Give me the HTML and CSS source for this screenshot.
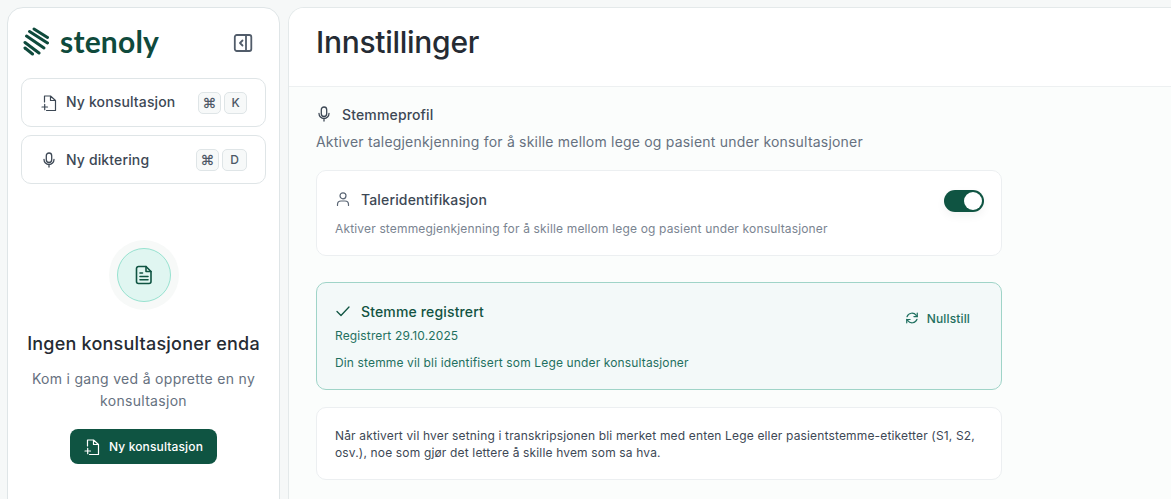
FILE: index.html
```html
<!DOCTYPE html>
<html lang="no">
<head>
<meta charset="utf-8">
<title>Stenoly</title>
<link rel="stylesheet" href="styles.css">
</head>
<body>
<div class="app">
  <aside class="sidebar">
    <div class="brand">
      <div class="logo">
        <svg class="logo-mark" viewBox="0 0 26 29" width="26" height="29"><g stroke="#0f4a3c" stroke-width="3" stroke-linecap="round"><path d="M11 2 L24.500 10.500"/><path d="M6.500 4.500 L24.500 16"/><path d="M3.500 9 L21 21"/><path d="M2 15.500 L16 26"/><path d="M2 21 L9.500 27"/></g></svg>
        <span class="logo-text">stenoly</span>
      </div>
      <svg class="collapse" viewBox="0 0 20 20" width="20" height="20" fill="none" stroke="#515c6a" stroke-width="1.800"><rect x="1.800" y="2" width="16.500" height="16" rx="2"/><path d="M13 2v16M9.500 7.500 7 10l2.500 2.500" stroke-linecap="round" stroke-linejoin="round"/></svg>
    </div>
    <div class="action">
      <svg class="ic" viewBox="0 0 16 16" width="16" height="16" fill="none" stroke="#3d4855" stroke-width="1.200" stroke-linejoin="round" stroke-linecap="round"><path d="M3.500 7V1h6l5 4.500V15.500H5.500M9.500 1v4.500h5M1 12h5.500M3.700 9.300v5.400"/></svg>
      <span class="action-label raised">Ny konsultasjon</span>
      <span class="keys"><kbd class="key cmd">⌘</kbd><kbd class="key">K</kbd></span>
    </div>
    <div class="action">
      <svg class="ic" viewBox="0 0 16 16" width="16" height="16" fill="none" stroke="#3d4855" stroke-width="1.300" stroke-linecap="round"><rect x="5.300" y="1" width="5.400" height="9.500" rx="2.700"/><path d="M3 7.500a5 5 0 0 0 10 0M8 12.500V15"/></svg>
      <span class="action-label">Ny diktering</span>
      <span class="keys"><kbd class="key cmd">⌘</kbd><kbd class="key wide">D</kbd></span>
    </div>
    <div class="empty">
      <div class="halo">
        <div class="circle">
          <svg viewBox="0 0 20 20" width="20" height="20" fill="none" stroke="#0f5442" stroke-width="1.600" stroke-linejoin="round" stroke-linecap="round"><path d="M4.500 1.500h7.500l5 5v10a2 2 0 0 1-2 2H4.500a2 2 0 0 1-2-2v-13a2 2 0 0 1 2-2z"/><path d="M12 1.500v5h5M6 8h2.500M6 11.500h8M6 14.800h8"/></svg>
        </div>
      </div>
      <h2 class="empty-title">Ingen konsultasjoner enda</h2>
      <p class="empty-text">Kom i gang ved å opprette en ny konsultasjon</p>
      <div class="primary">
        <svg viewBox="0 0 16 16" width="16" height="16" fill="none" stroke="#fff" stroke-width="1.200" stroke-linejoin="round" stroke-linecap="round"><path d="M3.500 7V1h6l5 4.500V15.500H5.500M9.500 1v4.500h5M1 12h5.500M3.700 9.300v5.400"/></svg>
        <span>Ny konsultasjon</span>
      </div>
    </div>
  </aside>
  <main class="main">
    <header class="header"><h1 class="title">Innstillinger</h1></header>
    <div class="content">
      <div class="section-head">
        <svg viewBox="0 0 16 16" width="16" height="16" fill="none" stroke="#3d4855" stroke-width="1.300" stroke-linecap="round"><rect x="5.300" y="1" width="5.400" height="9.500" rx="2.700"/><path d="M3 7.500a5 5 0 0 0 10 0M8 12.500V15"/></svg>
        <span>Stemmeprofil</span>
      </div>
      <p class="section-sub">Aktiver talegjenkjenning for å skille mellom lege og pasient under konsultasjoner</p>
      <section class="card speaker">
        <div class="speaker-text">
          <div class="speaker-head">
            <svg viewBox="0 0 16 16" width="16" height="16" fill="none" stroke="#5b6675" stroke-width="1.200" stroke-linecap="round"><circle cx="8" cy="4.800" r="3"/><path d="M2.500 14.500v-1a3.500 3.500 0 0 1 3.500-3.500h4a3.500 3.500 0 0 1 3.500 3.500v1"/></svg>
            <span>Taleridentifikasjon</span>
          </div>
          <p class="speaker-sub">Aktiver stemmegjenkjenning for å skille mellom lege og pasient under konsultasjoner</p>
        </div>
        <div class="toggle"><span class="knob"></span></div>
      </section>
      <section class="registered">
        <div class="reg-main">
          <div class="reg-head">
            <svg viewBox="0 0 16 16" width="16" height="16" fill="none" stroke="#0f5442" stroke-width="1.300" stroke-linecap="round" stroke-linejoin="round"><path d="M2 8.500 6 12.500 14 4"/></svg>
            <span>Stemme registrert</span>
          </div>
          <div class="reg-date">Registrert 29.10.2025</div>
          <div class="reg-note">Din stemme vil bli identifisert som Lege under konsultasjoner</div>
        </div>
        <div class="reset">
          <svg viewBox="0 0 16 16" width="14" height="14" fill="none" stroke="#1f7060" stroke-width="1.400" stroke-linecap="round" stroke-linejoin="round"><path d="M14 2.500v3.800h-3.800M2 13.500V9.700h3.800"/><path d="M2.300 6.500a6 6 0 0 1 10.500-1.500L14 6.300M13.700 9.500a6 6 0 0 1-10.500 1.500L2 9.700"/></svg>
          <span>Nullstill</span>
        </div>
      </section>
      <section class="card info">Når aktivert vil hver setning i transkripsjonen bli merket med enten Lege eller pasientstemme-etiketter (S1, S2, osv.), noe som gjør det lettere å skille hvem som sa hva.</section>
    </div>
  </main>
</div>
</body>
</html>
```
FILE: styles.css
```css
* { box-sizing: border-box; }
html, body { margin: 0; height: 100%; overflow: hidden; }
body { background: #f6f8f8; font-family: "Inter", "Liberation Sans", sans-serif; color: #252b33; }
.app { display: flex; gap: 8px; padding: 7px 0 0 7px; height: 499px; overflow: hidden; }
.sidebar { width: 273px; height: 520px; flex: none; background: #fff; border: 1px solid #dfe5e7; border-radius: 16px; padding: 13px 13px 0; display: flex; flex-direction: column; }
.brand { display: flex; align-items: center; justify-content: space-between; height: 44px; padding: 0 13px 0 2px; margin-bottom: 13px; }
.logo { display: flex; align-items: center; gap: 11px; margin-bottom: 4px; }
.logo-text { font-family: "Lato", sans-serif; font-size: 30px; font-weight: 700; color: #0f4a3c; line-height: 1; letter-spacing: 0.2px; }
.action { height: 49px; border: 1px solid #dfe5e7; border-radius: 10px; display: flex; align-items: center; padding: 0 18px 0 19px; margin-bottom: 8px; background: #fff; }
.ic { flex: none; }
.action-label { margin-left: 9px; font-size: 14px; font-weight: 500; letter-spacing: .14px; color: #3d4855; flex: 1; white-space: nowrap; }
.raised { padding-bottom: 2px; }
.keys { display: flex; gap: 3px; }
.key { min-width: 23px; height: 22px; border: 1px solid #dfe5e7; border-radius: 5px; background: #f7f9f9; font-family: "Inter", sans-serif; font-size: 12px; font-weight: 500; color: #4d5866; display: flex; align-items: center; justify-content: center; }
.cmd { font-size: 14px; }
.wide { min-width: 25px; }
.empty { display: flex; flex-direction: column; align-items: center; margin-top: 48px; }
.halo { width: 70px; height: 70px; border-radius: 50%; background: #f7f9f8; display: flex; align-items: center; justify-content: center; }
.circle { width: 54px; height: 54px; border-radius: 50%; background: #e0f6f1; border: 1px solid #97e2d0; display: flex; align-items: center; justify-content: center; }
.empty-title { margin: 21px 0 0; font-size: 18px; line-height: 26px; font-weight: 500; letter-spacing: .22px; color: #252b33; white-space: nowrap; }
.empty-text { margin: 11px 0 0; width: 240px; text-align: center; font-size: 14px; line-height: 22px; letter-spacing: .3px; color: #667180; }
.primary { margin-top: 17px; width: 147px; height: 35px; border-radius: 8px; background: #0f5442; color: #fff; font-size: 12px; font-weight: 500; letter-spacing: .14px; display: flex; align-items: center; justify-content: center; gap: 9px; white-space: nowrap; }
.main { flex: 1; min-width: 0; height: 520px; background: #fbfdfc; border: 1px solid #e4e9ea; border-right: 0; border-radius: 16px 0 0 16px; overflow: hidden; }
.header { height: 79px; background: #fff; border-bottom: 1px solid #edf0f1; padding: 0 27px 10px; display: flex; align-items: center; }
.title { margin: 0; font-size: 30px; font-weight: 500; line-height: 1; color: #252b33; letter-spacing: -0.28px; }
.content { padding: 17px 27px 0; width: 740px; }
.section-head { display: flex; align-items: center; gap: 10px; height: 20px; font-size: 14px; font-weight: 500; letter-spacing: .15px; color: #3d4855; }
.section-sub { margin: 7px 0 0; font-size: 14px; line-height: 22px; letter-spacing: .2px; color: #667180; white-space: nowrap; }
.card { background: #fff; border: 1px solid #eceff1; border-radius: 10px; }
.speaker { margin-top: 17px; height: 86px; padding: 18px 17px 0 18px; display: flex; justify-content: space-between; align-items: flex-start; }
.speaker-head { display: flex; align-items: center; gap: 10px; font-size: 14px; font-weight: 500; letter-spacing: .15px; color: #3d4855; height: 20px; }
.speaker-sub { margin: 11px 0 0; font-size: 12px; line-height: 18px; letter-spacing: .16px; color: #7a8491; white-space: nowrap; }
.toggle { width: 40px; height: 22px; margin-top: 1px; border-radius: 11px; background: #0f5442; display: flex; align-items: center; justify-content: flex-end; padding: 0 2px; box-shadow: 0 4px 10px rgba(0,0,0,.05); }
.knob { width: 18px; height: 18px; border-radius: 50%; background: #fff; }
.registered { margin-top: 26px; height: 108px; background: #f3f9f9; border: 1px solid #9fd4c8; border-radius: 10px; padding: 18px 31px 0 18px; display: flex; justify-content: space-between; align-items: flex-start; }
.reg-head { display: flex; align-items: center; gap: 10px; height: 20px; font-size: 14px; font-weight: 500; letter-spacing: .15px; color: #125342; }
.reg-date { margin-top: 6px; font-size: 12px; line-height: 18px; letter-spacing: .14px; color: #1f7060; }
.reg-note { margin-top: 9px; font-size: 12px; line-height: 18px; letter-spacing: .14px; color: #1f7060; white-space: nowrap; }
.reset { display: flex; align-items: center; gap: 8px; margin-top: 8px; font-size: 12px; font-weight: 500; letter-spacing: .14px; color: #1f7060; height: 18px; }
.info { margin-top: 17px; height: 73px; padding: 19px 18px 0; font-size: 12px; line-height: 17px; letter-spacing: .16px; color: #3d4855; }
```
